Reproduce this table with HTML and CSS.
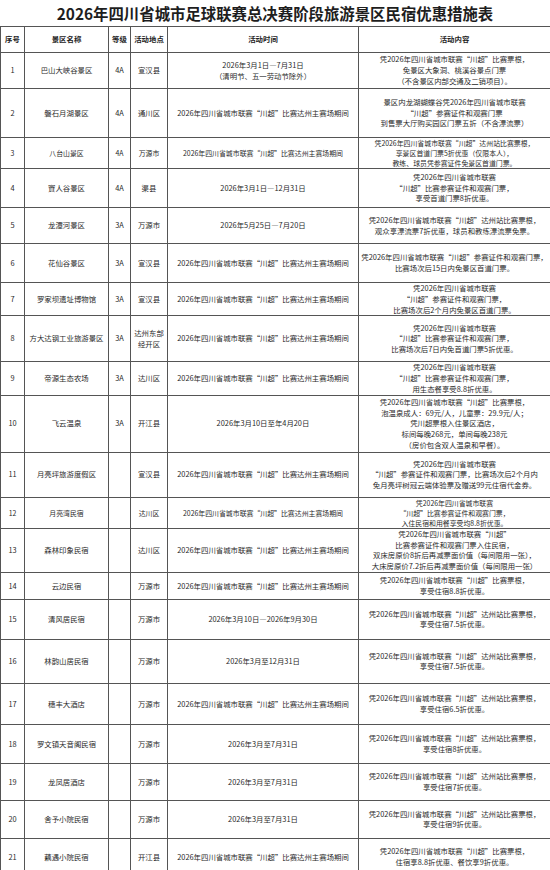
FILE: index.html
```html
<!DOCTYPE html>
<html lang="zh-CN">
<head>
<meta charset="utf-8">
<link rel="stylesheet" href="styles.css">
</head>
<body>
<div class="page">
  <h1 class="title">2026年四川省城市足球联赛总决赛阶段旅游景区民宿优惠措施表</h1>
  <table class="t">
    <colgroup>
      <col class="c-no"><col class="c-name"><col class="c-lv"><col class="c-loc"><col class="c-time"><col class="c-desc">
    </colgroup>
    <thead>
      <tr><th>序号</th><th>景区名称</th><th>等级</th><th>活动地点</th><th>活动时间</th><th>活动内容</th></tr>
    </thead>
    <tbody>
      <tr><td>1</td><td>巴山大峡谷景区</td><td>4A</td><td>宣汉县</td><td>2026年3月1日—7月31日<br>（清明节、五一劳动节除外）</td><td>凭2026年四川省城市联赛“川超”比赛票根，<br>免景区大象洞、桃溪谷景点门票<br>（不含景区内部交通及二销项目）。</td></tr>
      <tr><td>2</td><td>磐石月湖景区</td><td>4A</td><td>通川区</td><td>2026年四川省城市联赛“川超”比赛达州主赛场期间</td><td>景区内龙湖蝴蝶谷凭2026年四川省城市联赛<br>“川超”参赛证件和观赛门票<br>到售票大厅购买园区门票五折（不含漂流票）</td></tr>
      <tr class="tight"><td>3</td><td>八台山景区</td><td>4A</td><td>万源市</td><td>2026年四川省城市联赛“川超”比赛达州主赛场期间</td><td>凭2026年四川省城市联赛“川超”达州站比赛票根，<br>享景区首道门票5折优惠（仅限本人），<br>教练、球员凭参赛证件免景区首道门票。</td></tr>
      <tr><td>4</td><td>賨人谷景区</td><td>4A</td><td>渠县</td><td>2026年3月1日—12月31日</td><td>凭2026年四川省城市联赛<br>“川超”比赛参赛证件和观赛门票，<br>享受首道门票8折优惠。</td></tr>
      <tr><td>5</td><td>龙潭河景区</td><td>3A</td><td>万源市</td><td>2026年5月25日—7月20日</td><td>凭2026年四川省城市联赛“川超”达州站比赛票根，<br>观众享漂流票7折优惠，球员和教练漂流票免票。</td></tr>
      <tr><td>6</td><td>花仙谷景区</td><td>3A</td><td>宣汉县</td><td>2026年四川省城市联赛“川超”比赛达州主赛场期间</td><td>凭2026年四川省城市联赛“川超”参赛证件和观赛门票，<br>比赛场次后15日内免景区首道门票。</td></tr>
      <tr><td>7</td><td>罗家坝遗址博物馆</td><td>3A</td><td>宣汉县</td><td>2026年四川省城市联赛“川超”比赛达州主赛场期间</td><td>凭2026年四川省城市联赛<br>“川超”参赛证件和观赛门票，<br>比赛场次后2个月内免景区首道门票。</td></tr>
      <tr><td>8</td><td>方大达钢工业旅游景区</td><td>3A</td><td>达州东部<br>经开区</td><td>2026年四川省城市联赛“川超”比赛达州主赛场期间</td><td>凭2026年四川省城市联赛<br>“川超”比赛参赛证件和观赛门票，<br>比赛场次后7日内免首道门票5折优惠。</td></tr>
      <tr><td>9</td><td>帝源生态农场</td><td>3A</td><td>达川区</td><td>2026年四川省城市联赛“川超”比赛达州主赛场期间</td><td>凭2026年四川省城市联赛<br>“川超”比赛参赛证件和观赛门票，<br>用生态餐享受8.8折优惠。</td></tr>
      <tr><td>10</td><td>飞云温泉</td><td>3A</td><td>开江县</td><td>2026年3月10日至年4月20日</td><td>凭2026年四川省城市联赛“川超”比赛票根，<br>泡温泉成人：69元/人，儿童票：29.9元/人；<br>凭川超票根入住景区酒店，<br>标间每晚268元，单间每晚238元<br>（房价包含双人温泉和早餐）。</td></tr>
      <tr><td>11</td><td>月亮坪旅游度假区</td><td></td><td>宣汉县</td><td>2026年四川省城市联赛“川超”比赛达州主赛场期间</td><td>凭2026年四川省城市联赛<br>“川超”参赛证件和观赛门票，比赛场次后2个月内<br>免月亮坪树冠云端体验票及赠送99元住宿代金券。</td></tr>
      <tr class="tight"><td>12</td><td>月亮湾民宿</td><td></td><td>达川区</td><td>2026年四川省城市联赛“川超”比赛达州主赛场期间</td><td>凭2026年四川省城市联赛<br>“川超”比赛参赛证件和观赛门票，<br>入住民宿和用餐享受均8.8折优惠。</td></tr>
      <tr><td>13</td><td>森林印象民宿</td><td></td><td>达川区</td><td>2026年四川省城市联赛“川超”比赛达州主赛场期间</td><td>凭2026年四川省城市联赛“川超”<br>比赛参赛证件和观赛门票入住民宿，<br>双床房原价8折后再减票面价值（每间限用一张），<br>大床房原价7.2折后再减票面价值（每间限用一张）</td></tr>
      <tr><td>14</td><td>云边民宿</td><td></td><td>万源市</td><td>2026年四川省城市联赛“川超”比赛达州主赛场期间</td><td>凭2026年四川省城市联赛“川超”比赛票根，<br>享受住宿8.8折优惠。</td></tr>
      <tr><td>15</td><td>清风居民宿</td><td></td><td>万源市</td><td>2026年3月10日—2026年9月30日</td><td>凭2026年四川省城市联赛“川超”达州站比赛票根，<br>享受住宿7.5折优惠。</td></tr>
      <tr><td>16</td><td>林韵山居民宿</td><td></td><td>万源市</td><td>2026年3月至12月31日</td><td>凭2026年四川省城市联赛“川超”达州站比赛票根，<br>享受住宿7.5折优惠。</td></tr>
      <tr><td>17</td><td>穗丰大酒店</td><td></td><td>万源市</td><td>2026年四川省城市联赛“川超”比赛达州主赛场期间</td><td>凭2026年四川省城市联赛“川超”达州站比赛票根，<br>享受住宿6.5折优惠。</td></tr>
      <tr><td>18</td><td>罗文镇天音阁民宿</td><td></td><td>万源市</td><td>2026年3月至7月31日</td><td>凭2026年四川省城市联赛“川超”达州站比赛票根，<br>享受住宿8折优惠。</td></tr>
      <tr><td>19</td><td>龙凤居酒店</td><td></td><td>万源市</td><td>2026年3月至7月31日</td><td>凭2026年四川省城市联赛“川超”达州站比赛票根，<br>享受住宿7折优惠。</td></tr>
      <tr><td>20</td><td>舍予小院民宿</td><td></td><td>万源市</td><td>2026年3月至7月31日</td><td>凭2026年四川省城市联赛“川超”达州站比赛票根，<br>享受住宿9折优惠。</td></tr>
      <tr><td>21</td><td>藕遇小院民宿</td><td></td><td>开江县</td><td>2026年四川省城市联赛“川超”比赛达州主赛场期间</td><td>凭2026年四川省城市联赛“川超”比赛票根，<br>住宿享8.8折优惠、餐饮享9折优惠。</td></tr>
    </tbody>
  </table>
</div>
</body>
</html>
```

FILE: styles.css
```css
html, body {
  margin: 0;
  padding: 0;
  background: #ffffff;
}

.page {
  width: 550px;
  font-family: "Noto Sans CJK SC", "Noto Sans", sans-serif;
  color: #2a2a2a;
}

.title {
  margin: 0;
  height: 26px;
  line-height: 27px;
  font-size: 15.4px;
  font-weight: 700;
  text-align: center;
  color: #1e1e1e;
  letter-spacing: 0;
}

.t {
  width: 550px;
  border-collapse: collapse;
  table-layout: fixed;
}

.c-no { width: 24px; }
.c-name { width: 84px; }
.c-lv { width: 22px; }
.c-loc { width: 37px; }
.c-time { width: 191px; }
.c-desc { width: 192px; }

.t th,
.t td {
  border: 1px solid #555555;
  padding: 0;
  text-align: center;
  vertical-align: middle;
  font-size: 7.4px;
  line-height: 10.8px;
  white-space: nowrap;
  overflow: hidden;
}

.t th {
  height: 25px;
  font-weight: 700;
  color: #222222;
}

.t tr.tight td {
  font-size: 6.9px;
  line-height: 10px;
}

.t tbody tr:nth-child(1) { height: 36px; }
.t tbody tr:nth-child(2) { height: 49px; }
.t tbody tr:nth-child(3) { height: 30px; }
.t tbody tr:nth-child(4) { height: 39px; }
.t tbody tr:nth-child(5) { height: 36px; }
.t tbody tr:nth-child(6) { height: 39px; }
.t tbody tr:nth-child(7) { height: 33px; }
.t tbody tr:nth-child(8) { height: 46px; }
.t tbody tr:nth-child(9) { height: 31px; }
.t tbody tr:nth-child(10) { height: 57px; }
.t tbody tr:nth-child(11) { height: 45px; }
.t tbody tr:nth-child(12) { height: 30px; }
.t tbody tr:nth-child(13) { height: 43px; }
.t tbody tr:nth-child(14) { height: 27px; }
.t tbody tr:nth-child(15) { height: 40px; }
.t tbody tr:nth-child(16) { height: 44px; }
.t tbody tr:nth-child(17) { height: 41px; }
.t tbody tr:nth-child(18) { height: 39px; }
.t tbody tr:nth-child(19) { height: 37px; }
.t tbody tr:nth-child(20) { height: 38px; }
.t tbody tr:nth-child(21) { height: 37px; }
```
